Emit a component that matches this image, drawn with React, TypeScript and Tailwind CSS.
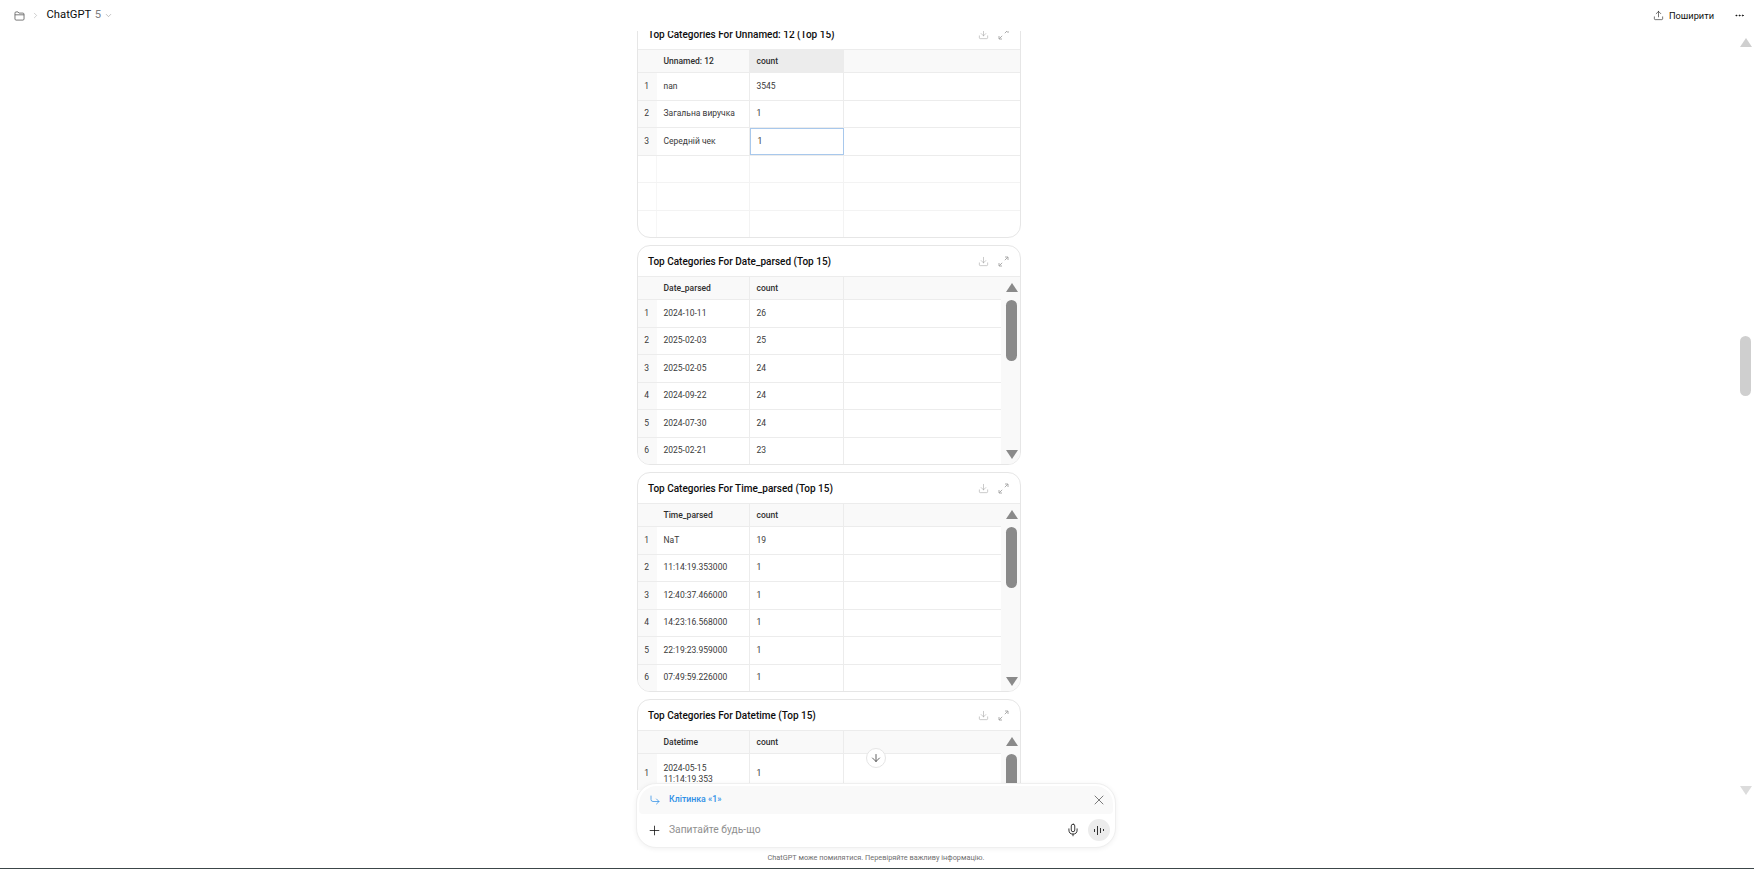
import { ArrowDown, ChevronDown, ChevronRight, CornerDownRight, Download, Ellipsis, Mic, Plus, Upload, X } from "lucide-react";

type Row = [string, string, string];

const dateRows: Row[] = [
  ["1", "2024-10-11", "26"],
  ["2", "2025-02-03", "25"],
  ["3", "2025-02-05", "24"],
  ["4", "2024-09-22", "24"],
  ["5", "2024-07-30", "24"],
  ["6", "2025-02-21", "23"],
];

const timeRows: Row[] = [
  ["1", "NaT", "19"],
  ["2", "11:14:19.353000", "1"],
  ["3", "12:40:37.466000", "1"],
  ["4", "14:23:16.568000", "1"],
  ["5", "22:19:23.959000", "1"],
  ["6", "07:49:59.226000", "1"],
];

const unnamedRows: Row[] = [
  ["1", "nan", "3545"],
  ["2", "Загальна виручка", "1"],
  ["3", "Середній чек", "1"],
  ["", "", ""],
  ["", "", ""],
  ["", "", ""],
];

function ExpandIcon() {
  return (
    <svg width="11" height="11" viewBox="0 0 11 11" fill="none" stroke="currentColor" strokeWidth="0.9">
      <path d="M7 1h3v3M10 1 6.800 4.200M4 10H1V7M1 10l3.200-3.200" />
    </svg>
  );
}

function CardHeader({ title }: { title: string }) {
  return (
    <div className="h-[31px] shrink-0 flex items-center justify-between pl-[10px] pr-[11px] pt-[1px] border-b border-[#ececec]">
      <span className="text-[10px] font-medium text-[#0d0d0d]">{title}</span>
      <div className="flex items-center gap-[9px] text-[#a3a3a3]">
        <Download size={11} strokeWidth={1.25} />
        <ExpandIcon />
      </div>
    </div>
  );
}

function CardScrollbar() {
  return (
    <div className="w-[19px] shrink-0 bg-[#f9f9f9] flex flex-col items-center pt-[6px] pl-[2px]">
      <div className="w-0 h-0 border-x-[6.5px] border-x-transparent border-b-[9px] border-b-[#8a8a8a]" />
      <div className="w-[11px] h-[61px] rounded-full bg-[#8a8a8a] mt-[8px]" />
      <div className="w-0 h-0 border-x-[6.5px] border-x-transparent border-t-[9px] border-t-[#8a8a8a] mt-[89px]" />
    </div>
  );
}

function HeadRow({ column, selected }: { column: string; selected?: boolean }) {
  return (
    <div className="grid grid-cols-[18.5px_93px_94px_1fr] h-[23px] bg-[#f9f9f9] border-b border-[#ececec] font-medium text-[#2f2f2f]">
      <div />
      <div className="border-r border-[#ececec] pl-[7px] flex items-center">{column}</div>
      <div className={`border-r border-[#ececec] pl-[7px] flex items-center ${selected ? "bg-[#ececec]" : ""}`}>count</div>
      <div />
    </div>
  );
}

function DataTable({ column, rows, selected }: { column: string; rows: Row[]; selected?: boolean }) {
  return (
    <div className="flex-1 min-w-0 overflow-hidden">
      <HeadRow column={column} selected={selected} />
      {rows.map((row, i) => {
        const empty = !row[0];
        const line = empty ? "border-[#f3f3f3]" : "border-[#ececec]";
        return (
          <div key={i} className={`grid grid-cols-[18.5px_93px_94px_1fr] h-[27.5px] border-b text-[#3a3a3a] ${line}`}>
            <div className={`flex items-center justify-center pr-[1px] ${empty ? "border-r border-[#f6f6f6]" : "bg-[#f9f9f9]"}`}>{row[0]}</div>
            <div className={`border-r pl-[7px] flex items-center ${line}`}>{row[1]}</div>
            <div
              className={`pl-[7px] flex items-center ${
                selected && i === 2 ? "border border-[#a8c8ec]" : `border-r ${line}`
              }`}
            >
              {row[2]}
            </div>
            <div />
          </div>
        );
      })}
    </div>
  );
}

function Card({
  title,
  column,
  rows,
  scroll = true,
  selected,
}: {
  title: string;
  column: string;
  rows: Row[];
  scroll?: boolean;
  selected?: boolean;
}) {
  return (
    <div className="w-[384px] h-[220px] shrink-0 rounded-[13px] border border-[#e6e6e6] overflow-hidden flex flex-col text-[8.5px] bg-white">
      <CardHeader title={title} />
      <div className="flex flex-1 min-h-0">
        <DataTable column={column} rows={rows} selected={selected} />
        {scroll && <CardScrollbar />}
      </div>
    </div>
  );
}

export default function App() {
  return (
    <div className="relative h-[869px] w-full overflow-hidden bg-white flex flex-col font-['Roboto','Noto_Sans',sans-serif] border-b border-[#3c4649]">
      {/* Top bar */}
      <header className="relative z-10 h-[31px] shrink-0 bg-white flex items-center justify-between pl-[14px] pr-[9px]">
        <div className="flex items-center text-[#5d5d5d]">
          <svg width="11" height="10" viewBox="0 0 12 11" fill="none" stroke="currentColor" strokeWidth="0.9">
            <path d="M1 3V2.200C1 1.500 1.500 1 2.200 1h2.100l1.100 1.300h4.400c.7 0 1.200.5 1.200 1.200v5.300c0 .7-.5 1.200-1.200 1.200H2.200C1.500 10 1 9.500 1 8.800V3zm0 1.200h10" />
          </svg>
          <ChevronRight size={9} strokeWidth={1.25} className="ml-[5.5px] text-[#9a9a9a]" />
          <span className="ml-[7px] text-[11.25px] text-[#0d0d0d]">ChatGPT</span>
          <span className="ml-[3.5px] text-[11.25px] text-[#7d7d7d]">5</span>
          <ChevronDown size={9} strokeWidth={1.25} className="ml-[3px] text-[#7d7d7d]" />
        </div>
        <div className="flex items-center text-[#0d0d0d]">
          <Upload size={11} strokeWidth={1.25} />
          <span className="ml-[5px] text-[9.25px]">Поширити</span>
          <Ellipsis size={11} strokeWidth={2} className="ml-[20px]" />
        </div>
      </header>

      {/* Thread */}
      <div className="flex-1 min-h-0 flex">
        <main className="flex-1 min-w-0 overflow-hidden flex flex-col items-center pl-[18px]">
          <div className="w-[480px] -mt-[13px] flex flex-col gap-[7px] pl-[1px]">
            <Card title="Top Categories For Unnamed: 12 (Top 15)" column="Unnamed: 12" rows={unnamedRows} scroll={false} selected />
            <Card title="Top Categories For Date_parsed (Top 15)" column="Date_parsed" rows={dateRows} />
            <Card title="Top Categories For Time_parsed (Top 15)" column="Time_parsed" rows={timeRows} />
            <div className="w-[384px] h-[220px] shrink-0 rounded-[13px] border border-[#e6e6e6] overflow-hidden flex flex-col text-[8.5px] bg-white">
              <CardHeader title="Top Categories For Datetime (Top 15)" />
              <div className="flex flex-1 min-h-0">
                <div className="flex-1 min-w-0">
                  <HeadRow column="Datetime" />
                  <div className="grid grid-cols-[18.5px_93px_94px_1fr] h-[40px] border-b border-[#ececec] text-[#3a3a3a]">
                    <div className="bg-[#f9f9f9] flex items-center justify-center pr-[1px]">1</div>
                    <div className="border-r border-[#ececec] pl-[7px] flex items-center leading-[11px]">
                      <span>
                        2024-05-15
                        <br />
                        11:14:19.353
                      </span>
                    </div>
                    <div className="border-r border-[#ececec] pl-[7px] flex items-center">1</div>
                    <div />
                  </div>
                </div>
                <CardScrollbar />
              </div>
            </div>
          </div>
        </main>

        {/* Page scrollbar */}
        <div className="w-[20px] shrink-0 flex flex-col items-center pt-[7px] pl-[3px]">
          <div className="w-0 h-0 border-x-[6.5px] border-x-transparent border-b-[9px] border-b-[#cfcfcf]" />
          <div className="w-[11px] h-[60px] rounded-full bg-[#cfcfcf] mt-[289px]" />
          <div className="w-0 h-0 border-x-[6.5px] border-x-transparent border-t-[9px] border-t-[#dcdcdc] mt-[390px]" />
        </div>
      </div>

      {/* Scroll down button */}
      <div className="absolute left-[866px] top-[748px] w-[20px] h-[20px] rounded-full bg-white border border-[#e5e5e5] flex items-center justify-center text-[#2f2f2f]">
        <ArrowDown size={12} strokeWidth={1.5} />
      </div>

      {/* Composer */}
      <div className="absolute left-[620px] w-[512px] top-[790px] bottom-0 bg-white" />
      <div className="absolute left-[636px] top-[783px] w-[480px] h-[65px] rounded-[20px] bg-white border border-[#efefef] shadow-[0_1px_5px_rgba(0,0,0,0.06)] p-[2px] flex flex-col">
        <div className="h-[28px] shrink-0 rounded-t-[18px] rounded-b-[4px] bg-[#f9f9f9] flex items-center pl-[10px] pr-[6px]">
          <CornerDownRight size={12} strokeWidth={1.5} className="text-[#2f8fe6]" />
          <span className="ml-[8px] text-[8.75px] font-medium text-[#2f8fe6]">Клітинка «1»</span>
          <X size={16} strokeWidth={1} className="ml-auto text-[#3a3a3a]" />
        </div>
        <div className="flex-1 flex items-center pl-[8px] pr-[3px] pt-[1px]">
          <Plus size={15} strokeWidth={1.25} className="text-[#0d0d0d]" />
          <span className="ml-[7px] text-[10.25px] text-[#8f8f8f]">Запитайте будь-що</span>
          <Mic size={14} strokeWidth={1.4} className="ml-auto text-[#0d0d0d]" />
          <div className="ml-[8.5px] w-[22px] h-[22px] rounded-full bg-[#ececec] flex items-center justify-center gap-[2px]">
            <span className="w-[1px] h-[3px] bg-[#333]" />
            <span className="w-[1px] h-[9px] bg-[#333]" />
            <span className="w-[1px] h-[5px] bg-[#333]" />
            <span className="w-[1px] h-[2px] bg-[#333]" />
          </div>
        </div>
      </div>

      {/* Footer note */}
      <p className="absolute left-[636px] w-[480px] top-[852px] text-center text-[7.35px] text-[#6f6f6f]">
        ChatGPT може помилятися. Перевіряйте важливу інформацію.
      </p>
    </div>
  );
}
